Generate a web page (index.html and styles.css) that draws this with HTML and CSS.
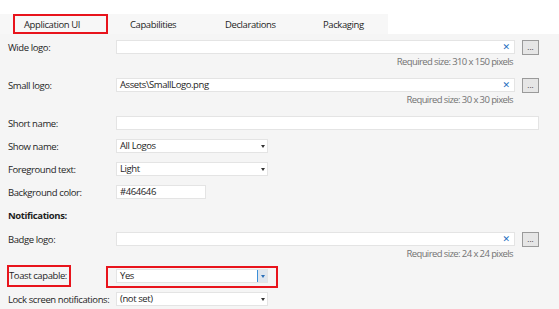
FILE: index.html
```html
<!DOCTYPE html>
<html>
<head>
<meta charset="utf-8">
<link rel="stylesheet" href="styles.css">
</head>
<body>
<div class="page">
  <div class="tabbar">
    <div class="tabs">
      <div class="tab tab-active">Application UI</div>
      <div class="tab tab-2">Capabilities</div>
      <div class="tab tab-3">Declarations</div>
      <div class="tab tab-4">Packaging</div>
    </div>
  </div>
  <div class="content">
    <div class="row r-wide">
      <div class="label">Wide logo:</div>
      <div class="field-line">
        <div class="input logo-input"><span class="clear">&#x2715;</span></div>
        <div class="browse">...</div>
      </div>
    </div>
    <div class="req">Required size: 310 x 150 pixels</div>

    <div class="row r-small">
      <div class="label">Small logo:</div>
      <div class="field-line">
        <div class="input logo-input"><span class="val">Assets\SmallLogo.png</span><span class="clear">&#x2715;</span></div>
        <div class="browse">...</div>
      </div>
    </div>
    <div class="req">Required size: 30 x 30 pixels</div>

    <div class="row r-short">
      <div class="label">Short name:</div>
      <div class="input full-input"></div>
    </div>
    <div class="row r-gap">
      <div class="label">Show name:</div>
      <div class="select"><span class="val">All Logos</span><span class="arrow"></span></div>
    </div>
    <div class="row r-gap">
      <div class="label">Foreground text:</div>
      <div class="select"><span class="val">Light</span><span class="arrow"></span></div>
    </div>
    <div class="row r-gap">
      <div class="label">Background color:</div>
      <div class="input color-input"><span class="val">#464646</span></div>
    </div>
    <div class="heading">Notifications:</div>
    <div class="row r-badge">
      <div class="label">Badge logo:</div>
      <div class="field-line">
        <div class="input logo-input"><span class="clear">&#x2715;</span></div>
        <div class="browse">...</div>
      </div>
    </div>
    <div class="req">Required size: 24 x 24 pixels</div>
    <div class="row r-toast">
      <div class="label"><span class="marked-label">Toast capable:</span></div>
      <div class="select marked"><span class="val">Yes</span><span class="drop"><span class="arrow arrow-blue"></span></span></div>
    </div>
    <div class="row r-gap">
      <div class="label">Lock screen notifications:</div>
      <div class="select"><span class="val">(not set)</span><span class="arrow"></span></div>
    </div>
  </div>
</div>
</body>
</html>
```

FILE: styles.css
```css
* { box-sizing: border-box; }
html, body { margin: 0; padding: 0; }
body {
  width: 559px;
  height: 309px;
  overflow: hidden;
  background: #f5f5f5;
  font-family: "Open Sans", "Noto Sans", sans-serif;
  font-size: 9.5px;
  letter-spacing: -0.4px;
  color: #1e1e1e;
}
.tabbar {
  height: 34px;
  background: #ffffff;
  padding-top: 14px;
}
.tabs {
  display: flex;
  width: 388px;
  height: 20px;
  background: #f7f7f7;
  padding-left: 13px;
}
.tab {
  height: 20px;
  display: flex;
  align-items: center;
  color: #1e1e1e;
  white-space: nowrap;
}
.tab-active {
  width: 95px;
  padding-left: 9px;
  border: 2px solid #e8141c;
}
.tab-2 { width: 97px; padding-left: 22px; }
.tab-3 { width: 98px; padding-left: 20px; }
.tab-4 { padding-left: 20px; }
.content {
  padding: 0 0 0 8px;
}
.row {
  display: flex;
  align-items: center;
  height: 14px;
}
.label {
  width: 108px;
  flex: none;
  white-space: nowrap;
}
.r-wide { margin-top: 6px; }
.r-small { margin-top: 10px; }
.r-short { margin-top: 10px; }
.r-gap { margin-top: 9px; }
.r-badge { margin-top: 9px; }
.r-toast { margin-top: 9px; }
.field-line {
  display: flex;
  align-items: flex-start;
  height: 14px;
}
.input {
  height: 14px;
  background: #ffffff;
  border: 1px solid #e4e4e4;
  display: flex;
  align-items: center;
  padding: 0 3px;
  position: relative;
}
.logo-input { width: 399px; }
.full-input { width: 423px; }
.color-input { width: 90px; }
.val { line-height: 12px; }
.clear {
  position: absolute;
  right: 4px;
  top: 1px;
  font-size: 9px;
  font-weight: bold;
  color: #1e6fc0;
  line-height: 10px;
  letter-spacing: 0;
  font-family: "DejaVu Sans", sans-serif;
}
.browse {
  width: 17px;
  height: 15px;
  margin-left: 7px;
  background: #e6e6e6;
  border: 1px solid #9a9a9a;
  font-size: 8px;
  line-height: 11px;
  letter-spacing: 0;
  text-align: center;
  color: #333;
}
.req {
  width: 514px;
  height: 14px;
  padding-top: 2px;
  line-height: 12px;
  text-align: right;
  color: #737373;
  letter-spacing: -0.6px;
  padding-right: 1px;
  margin-left: -8px;
}
.select {
  width: 152px;
  height: 14px;
  background: #ffffff;
  border: 1px solid #e4e4e4;
  display: flex;
  align-items: center;
  justify-content: space-between;
  padding: 0 0 0 3px;
  position: relative;
}
.arrow {
  width: 0;
  height: 0;
  border-left: 2.5px solid transparent;
  border-right: 2.5px solid transparent;
  border-top: 3px solid #333333;
  margin-right: 2px;
  margin-top: 1px;
}
.drop {
  width: 10px;
  height: 12px;
  background: #dfe6ee;
  border-left: 1px solid #3d8fd8;
  display: flex;
  align-items: center;
  justify-content: center;
}
.arrow-blue {
  border-top-color: #2a6fb8;
  margin: 1px 0 0 0;
}
.marked::after {
  content: "";
  position: absolute;
  left: -11px;
  right: -11px;
  top: -4px;
  bottom: -6px;
  border: 2px solid #e8141c;
}
.marked-label {
  display: inline-block;
  border: 2px solid #e8141c;
  padding: 2px 2px 3px 0;
  margin-left: -1px;
  margin-top: -1px;
  letter-spacing: -0.4px;
  white-space: nowrap;
}
.heading {
  font-weight: bold;
  height: 14px;
  line-height: 14px;
  margin-top: 10px;
}
```
